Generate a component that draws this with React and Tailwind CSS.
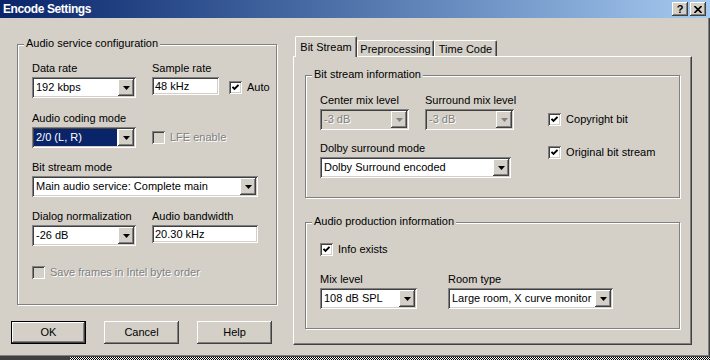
import React from "react";

const raised = "shadow-[inset_-1px_-1px_#404040,inset_1px_1px_#ffffff,inset_-2px_-2px_#808080,inset_2px_2px_#d4d0c8]";
const sunken = "shadow-[inset_1px_1px_#808080,inset_-1px_-1px_#ffffff,inset_2px_2px_#404040,inset_-2px_-2px_#d4d0c8]";
const grayText = "text-[#808080] [text-shadow:1px_1px_0_#ffffff]";

function Arrow({ disabled }) {
    return (
        <svg width="7" height="4" viewBox="0 0 7 4">
            <polygon points="0,0 7,0 3.5,4" fill={disabled ? "#808080" : "#000"} />
        </svg>
    );
}

function Combo({ value, w, selected, disabled }) {
    return (
        <div className={`flex h-[21px] ${w} p-[2px] ${disabled ? "bg-[#d4d0c8]" : "bg-white"} ${sunken}`}>
            <div className="flex min-w-0 flex-1 pr-[1px]">
                <span className={`flex h-full flex-1 items-center whitespace-nowrap pl-[2px] ${selected ? "bg-[#0a246a] text-white" : ""} ${disabled ? grayText : ""}`}>
                    {value}
                </span>
            </div>
            <div className={`flex h-[17px] w-[16px] items-center justify-center bg-[#d4d0c8] ${raised}`}>
                <Arrow disabled={disabled} />
            </div>
        </div>
    );
}

function TextBox({ value, w }) {
    return (
        <div className={`flex h-[18px] ${w} items-center bg-white pl-[3px] ${sunken}`}>{value}</div>
    );
}

function Check({ checked, disabled, label }) {
    return (
        <div className="flex items-center">
            <span className={`flex h-[13px] w-[13px] items-center justify-center ${disabled ? "bg-[#d4d0c8]" : "bg-white"} ${sunken}`}>
                {checked && (
                    <svg width="7" height="7" viewBox="0 0 7 7">
                        <polyline points="0.5,2.8 2.5,4.8 6.5,0.8" fill="none" stroke="#000" strokeWidth="1.9" />
                    </svg>
                )}
            </span>
            <span className={`ml-[5px] ${disabled ? grayText : ""}`}>{label}</span>
        </div>
    );
}

function Field({ label, children, className = "" }) {
    return (
        <div className={`flex flex-col ${className}`}>
            <span className="mb-[2px] h-[13px]">{label}</span>
            {children}
        </div>
    );
}

function Group({ title, className, children }) {
    return (
        <div className={`relative border border-[#808080] shadow-[1px_1px_0_#ffffff,inset_1px_1px_0_#ffffff] ${className}`}>
            <span className="absolute left-[6px] top-[-8px] bg-[#d4d0c8] px-[2px] leading-[13px]">{title}</span>
            {children}
        </div>
    );
}

function Button({ children, isDefault }) {
    return (
        <div className={`flex h-[23px] w-[75px] items-center justify-center ${isDefault ? "border border-black" : ""} ${raised}`}>
            {children}
        </div>
    );
}

function Tab({ label, active, w }) {
    return (
        <div
            className={`flex ${w} items-start justify-center rounded-t-[2px] border-l border-r border-t border-l-white border-t-white border-r-[#404040] bg-[#d4d0c8] shadow-[inset_-1px_0_#808080] ${
                active ? "relative z-10 -mb-[1px] h-[21px] pt-[4px]" : "h-[16px] pt-[2px]"
            }`}
        >
            {label}
        </div>
    );
}

export default function App() {
    return (
        <div className="h-[360px] w-[710px] overflow-hidden bg-[#d4d0c8] font-['Liberation_Sans',Arial,sans-serif] text-[11px] leading-[13px] text-black">
            <div className="flex h-[357px] flex-col shadow-[inset_-1px_-1px_#404040,inset_-2px_-2px_#808080]">
                {/* title bar */}
                <div className="flex h-[18px] items-center bg-linear-to-r from-[#0a246a] to-[#a6caf0] pl-[3px] pr-[4px]">
                    <span className="text-[12px] font-bold tracking-[-0.4px] text-white">Encode Settings</span>
                    <div className="ml-auto flex gap-[2px]">
                        <div className={`flex h-[14px] w-[16px] items-center justify-center bg-[#d4d0c8] text-[11px] font-bold leading-none ${raised}`}>?</div>
                        <div className={`flex h-[14px] w-[16px] items-center justify-center bg-[#d4d0c8] ${raised}`}>
                            <svg width="8" height="7" viewBox="0 0 8 7">
                                <path d="M0.5 0 L7.5 7 M7.5 0 L0.5 7" stroke="#000" strokeWidth="1.6" />
                            </svg>
                        </div>
                    </div>
                </div>

                <div className="mt-[1px] flex">
                    {/* left column */}
                    <div className="flex w-[293px] flex-col">
                        <Group title="Audio service configuration" className="ml-[17px] mt-[25px] h-[261px] w-[260px]">
                            <div className="flex flex-col pl-[14px] pt-[17px]">
                                <div className="flex gap-[16px]">
                                    <Field label="Data rate">
                                        <Combo value="192 kbps" w="w-[104px]" />
                                    </Field>
                                    <Field label="Sample rate">
                                        <div className="flex items-start">
                                            <TextBox value="48 kHz" w="w-[67px]" />
                                            <div className="ml-[10px] mt-[4px]">
                                                <Check checked label="Auto" />
                                            </div>
                                        </div>
                                    </Field>
                                </div>
                                <div className="mt-[14px] flex items-end gap-[16px]">
                                    <Field label="Audio coding mode">
                                        <Combo value="2/0 (L, R)" w="w-[104px]" selected />
                                    </Field>
                                    <div className="mb-[4px]">
                                        <Check disabled label="LFE enable" />
                                    </div>
                                </div>
                                <Field label="Bit stream mode" className="mt-[13px]">
                                    <Combo value="Main audio service: Complete main" w="w-[226px]" />
                                </Field>
                                <div className="mt-[13px] flex gap-[16px]">
                                    <Field label="Dialog normalization">
                                        <Combo value="-26 dB" w="w-[104px]" />
                                    </Field>
                                    <Field label="Audio bandwidth">
                                        <TextBox value="20.30 kHz" w="w-[106px]" />
                                    </Field>
                                </div>
                                <div className="mt-[20px]">
                                    <Check disabled label="Save frames in Intel byte order" />
                                </div>
                            </div>
                        </Group>
                        <div className="ml-[11px] mt-[16px] flex gap-[18px]">
                            <Button isDefault>OK</Button>
                            <Button>Cancel</Button>
                            <Button>Help</Button>
                        </div>
                    </div>

                    {/* right column: tabs */}
                    <div className="mt-[18px] flex flex-col">
                        <div className="ml-[2px] flex h-[19px] items-end">
                            <Tab label="Bit Stream" active w="w-[62px]" />
                            <Tab label="Preprocessing" w="w-[77px]" />
                            <Tab label="Time Code" w="w-[63px]" />
                        </div>
                        <div className="h-[289px] w-[399px] border border-b-[#404040] border-l-white border-r-[#404040] border-t-white shadow-[inset_-1px_-1px_#808080]">
                            <Group title="Bit stream information" className="ml-[11px] mt-[18px] h-[123px] w-[375px]">
                                <div className="flex pl-[14px] pt-[18px]">
                                    <div className="flex flex-col">
                                        <div className="flex gap-[16px]">
                                            <Field label="Center mix level">
                                                <Combo value="-3 dB" w="w-[89px]" disabled />
                                            </Field>
                                            <Field label="Surround mix level">
                                                <Combo value="-3 dB" w="w-[89px]" disabled />
                                            </Field>
                                        </div>
                                        <Field label="Dolby surround mode" className="mt-[12px]">
                                            <Combo value="Dolby Surround encoded" w="w-[191px]" />
                                        </Field>
                                    </div>
                                    <div className="ml-[32px] mt-[19px] flex flex-col gap-[20px]">
                                        <Check checked label="Copyright bit" />
                                        <Check checked label="Original bit stream" />
                                    </div>
                                </div>
                            </Group>
                            <Group title="Audio production information" className="ml-[11px] mt-[24px] h-[107px] w-[375px]">
                                <div className="flex flex-col pl-[14px] pt-[20px]">
                                    <Check checked label="Info exists" />
                                    <div className="mt-[17px] flex gap-[31px]">
                                        <Field label="Mix level">
                                            <Combo value="108 dB SPL" w="w-[97px]" />
                                        </Field>
                                        <Field label="Room type">
                                            <Combo value="Large room, X curve monitor" w="w-[165px]" />
                                        </Field>
                                    </div>
                                </div>
                            </Group>
                        </div>
                    </div>
                </div>
            </div>
            <div className="flex h-[3px]">
                <div className="w-[70px] bg-[#404040]" />
                <div className="flex-1 bg-[repeating-conic-gradient(#000000_0%_25%,#ffffff_0%_50%)] bg-[length:2px_2px]" />
            </div>
        </div>
    );
}
